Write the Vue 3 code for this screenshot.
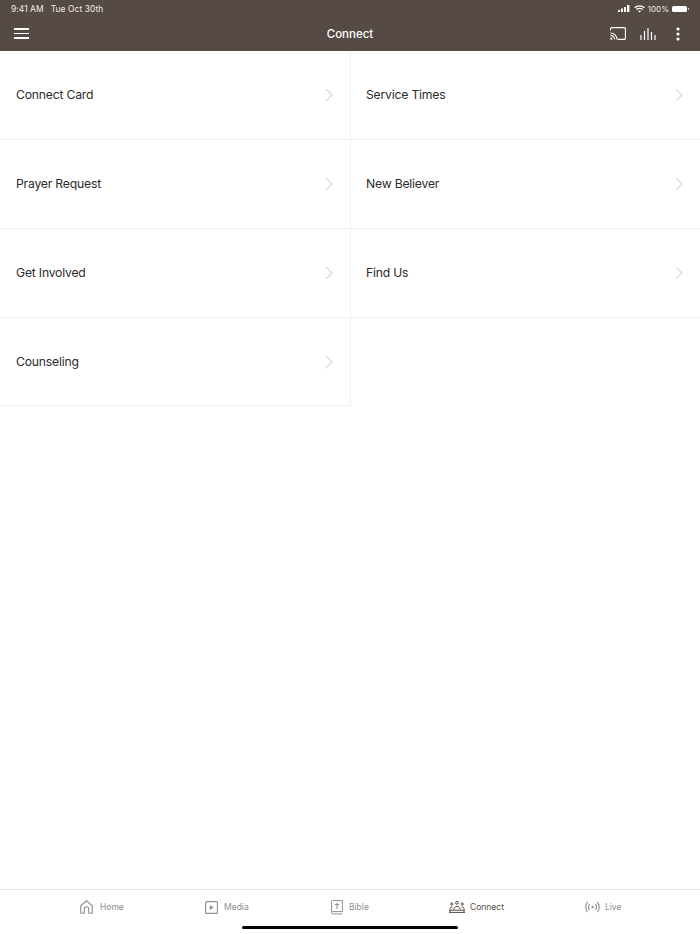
<template>
  <div class="page">
    <header class="top-bar">
      <div class="status-bar">
        <div class="status-left">
          <span>9:41 AM</span>
          <span>Tue Oct 30th</span>
        </div>
        <div class="status-right">
          <svg class="signal" width="12" height="7" viewBox="0 0 12 7" fill="#fff">
            <rect x="0" y="5" width="2" height="2" />
            <rect x="3" y="3.5" width="2" height="3.5" />
            <rect x="6" y="2" width="2" height="5" />
            <rect x="9" y="0" width="2.4" height="7" />
          </svg>
          <svg width="11" height="8" viewBox="0 0 11 8" fill="none" stroke="#fff" stroke-width="1.3">
            <path d="M0.6 2.8C3.3 0.2 7.7 0.2 10.4 2.8" />
            <path d="M2.3 4.5C4 2.9 7 2.9 8.7 4.5" />
            <path d="M5.5 7.6L3.9 6C4.8 5.3 6.2 5.3 7.1 6Z" fill="#fff" stroke="none" />
          </svg>
          <span class="battery-pct">100%</span>
          <div class="battery"></div>
        </div>
      </div>
      <div class="nav-bar">
        <button class="menu-btn">
          <span></span><span></span><span></span>
        </button>
        <div class="nav-title">Connect</div>
        <div class="nav-actions">
          <svg width="16" height="13" viewBox="0 0 16 13" fill="none" stroke="#fff" stroke-width="1.1">
            <path d="M0.6 3.5V1.6C0.6 1 1 0.6 1.6 0.6H14.4C15 0.6 15.4 1 15.4 1.6V11.4C15.4 12 15 12.4 14.4 12.4H7.5" />
            <path d="M0.5 6C4 6 7 9 7 12.6" />
            <path d="M0.5 8.4C2.8 8.4 4.7 10.3 4.7 12.6" />
            <circle cx="1.3" cy="11.7" r="1.1" fill="#fff" stroke="none" />
          </svg>
          <svg width="16" height="12" viewBox="0 0 16 12" fill="none" stroke="#fff" stroke-width="1.2">
            <path d="M1 7V12M4.5 3V12M8 0V12M11.5 4V12M15 7V12" />
          </svg>
          <svg class="dots" width="4" height="14" viewBox="0 0 4 14" fill="#fff">
            <circle cx="2" cy="2" r="1.6" />
            <circle cx="2" cy="7" r="1.6" />
            <circle cx="2" cy="12" r="1.6" />
          </svg>
        </div>
      </div>
    </header>

    <main class="content">
      <div class="grid">
        <div v-for="item in items" :key="item" class="cell">
          <span class="cell-label">{{ item }}</span>
          <svg width="8" height="14" viewBox="0 0 8 14" fill="none" stroke="#d6d6d6" stroke-width="1.1">
            <path d="M0.8 0.8L7 7L0.8 13.2" />
          </svg>
        </div>
      </div>
    </main>

    <footer class="tab-bar">
      <div class="tab tab-home">
        <svg width="13" height="14" viewBox="0 0 14 15" fill="none" stroke="#8e8e8e" stroke-width="1.2">
          <path d="M0.8 6.2L7 0.8L13.2 6.2V14.2H9.4V9.6C9.4 8.3 8.3 7.2 7 7.2C5.7 7.2 4.6 8.3 4.6 9.6V14.2H0.8Z" />
        </svg>
        <span>Home</span>
      </div>
      <div class="tab">
        <svg width="13" height="13" viewBox="0 0 13 13" fill="none" stroke="#8e8e8e" stroke-width="1.1">
          <rect x="0.6" y="0.6" width="11.8" height="11.8" rx="1" />
          <path d="M4.8 3.9L8.6 6.5L4.8 9.1Z" fill="#8e8e8e" stroke="none" />
        </svg>
        <span>Media</span>
      </div>
      <div class="tab">
        <svg width="12" height="15" viewBox="0 0 12 15" fill="none" stroke="#8e8e8e" stroke-width="1">
          <path d="M0.6 12V1.4C0.6 0.9 0.9 0.6 1.4 0.6H11.4V11.6H1.6C1 11.6 0.6 12 0.6 12.7C0.6 13.4 1 13.9 1.6 13.9H11.4" />
          <path d="M6 2.5V9M3.8 4.6H8.2" />
        </svg>
        <span>Bible</span>
      </div>
      <div class="tab active">
        <svg width="16" height="12" viewBox="0 0 16 12" fill="none" stroke="#554a44" stroke-width="1">
          <circle cx="8" cy="1.8" r="1.4" />
          <circle cx="2.8" cy="3" r="1.1" />
          <circle cx="13.2" cy="3" r="1.1" />
          <path d="M4.8 8.6C4.8 6.6 6 5.4 8 5.4C10 5.4 11.2 6.6 11.2 8.6" />
          <path d="M1 8.6V7.6C1 6.7 1.8 6 3.4 6M15 8.6V7.6C15 6.7 14.2 6 12.6 6" />
          <path d="M0 9.2H16M0 11.4H16" />
          <path d="M1 9.2V11.4M15 9.2V11.4" />
        </svg>
        <span>Connect</span>
      </div>
      <div class="tab">
        <svg width="15" height="12" viewBox="0 0 15 12" fill="none" stroke="#8e8e8e" stroke-width="1.1">
          <path d="M2.6 0.8C0.2 3.4 0.2 8.6 2.6 11.2M12.4 0.8C14.8 3.4 14.8 8.6 12.4 11.2" />
          <path d="M4.6 3C3.4 4.6 3.4 7.4 4.6 9M10.4 3C11.6 4.6 11.6 7.4 10.4 9" />
          <circle cx="7.5" cy="6" r="1.2" fill="#8e8e8e" stroke="none" />
        </svg>
        <span>Live</span>
      </div>
      <div class="home-indicator"></div>
    </footer>
  </div>
</template>

<script setup>
const items = [
  'Connect Card',
  'Service Times',
  'Prayer Request',
  'New Believer',
  'Get Involved',
  'Find Us',
  'Counseling',
]
</script>

<style>
html,
body {
  margin: 0;
  background: #fff;
}
</style>

<style scoped>
.page {
  position: relative;
  width: 700px;
  height: 934px;
  display: flex;
  flex-direction: column;
  overflow: hidden;
  font-family: Inter, "Liberation Sans", sans-serif;
  background: #fff;
}

/* header */
.top-bar {
  height: 51px;
  flex: none;
  background: #554a44;
  color: #fff;
  display: flex;
  flex-direction: column;
}

.status-bar {
  height: 16px;
  padding: 1px 13px 0 11px;
  box-sizing: border-box;
  display: flex;
  align-items: center;
  justify-content: space-between;
  font-size: 8.4px;
  letter-spacing: 0.1px;
  color: #f1eeec;
}

.status-left {
  display: flex;
  gap: 7px;
}

.status-right {
  display: flex;
  align-items: center;
  gap: 3px;
}

.signal {
  margin-right: 1px;
}

.battery-pct {
  font-size: 8px;
  letter-spacing: 0;
}

.battery {
  position: relative;
  width: 15px;
  height: 6px;
  border-radius: 1.5px;
  background: #fff;
}

.battery::after {
  content: "";
  position: absolute;
  right: -2px;
  top: 2px;
  width: 1px;
  height: 2px;
  background: #cfcac7;
}

.nav-bar {
  flex: 1;
  position: relative;
  display: flex;
  align-items: center;
  justify-content: space-between;
  padding: 0 20px 0 14px;
}

.menu-btn {
  width: 15px;
  height: 11px;
  padding: 0;
  border: 0;
  background: none;
  display: flex;
  flex-direction: column;
  justify-content: space-between;
}

.menu-btn span {
  display: block;
  height: 1.6px;
  background: #fff;
}

.nav-title {
  position: absolute;
  left: 0;
  right: 0;
  text-align: center;
  font-size: 11.5px;
  font-weight: 500;
}

.nav-actions {
  display: flex;
  align-items: center;
  gap: 14px;
}

.dots {
  margin-left: 6px;
}

/* list grid */
.content {
  flex: 1;
}

.grid {
  display: grid;
  grid-template-columns: 351px 349px;
  grid-template-rows: 89px 89px 89px 88px;
}

.cell {
  display: flex;
  align-items: center;
  justify-content: space-between;
  box-sizing: border-box;
  padding: 0 17px 0 16px;
  border-bottom: 1px solid #f0f0f0;
}

.cell:nth-child(odd) {
  border-right: 1px solid #f0f0f0;
}

.cell:nth-child(even) {
  padding-left: 15px;
}

.cell-label {
  padding-bottom: 1px;
  font-size: 12.2px;
  letter-spacing: -0.2px;
  color: #2b2b2b;
}

.cell:last-child .cell-label {
  padding-bottom: 0;
}

/* tabs */
.tab-bar {
  position: relative;
  height: 45px;
  flex: none;
  box-sizing: border-box;
  border-top: 1px solid #e6e6e6;
  display: grid;
  grid-template-columns: 80px 125px 126px 118px 136px 115px;
  padding-bottom: 10px;
}

.tab {
  display: flex;
  align-items: center;
  gap: 6px;
  font-size: 8.5px;
  color: #8e8e8e;
}

.tab.active,
.tab:nth-child(5) {
  gap: 5px;
}

.tab.active {
  color: #554a44;
}

.tab-home {
  grid-column: 2;
  gap: 7px;
}

.home-indicator {
  position: absolute;
  left: 242px;
  bottom: 5px;
  width: 216px;
  height: 3px;
  border-radius: 2px;
  background: #000;
}
</style>
